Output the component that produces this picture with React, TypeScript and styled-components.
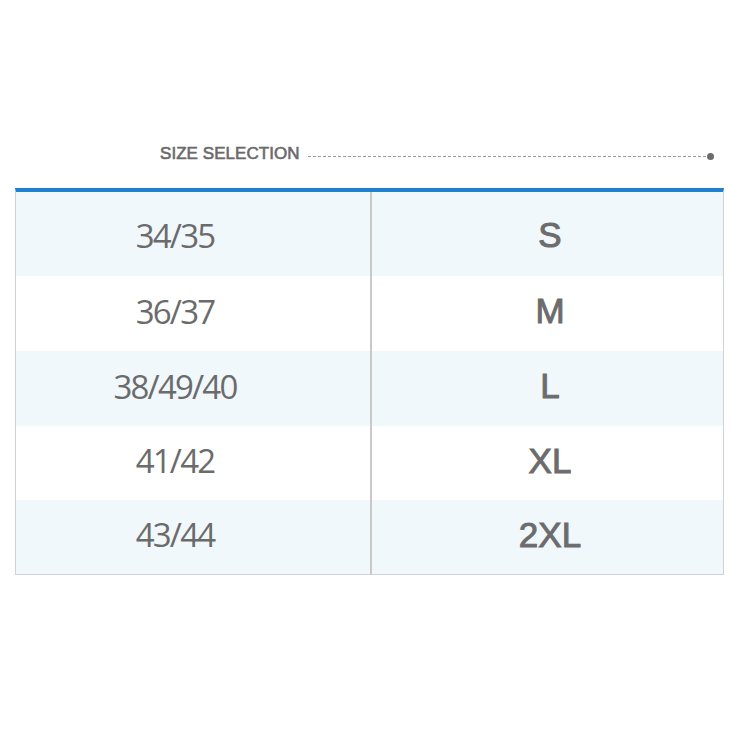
import React from "react";
import styled, { createGlobalStyle } from "styled-components";

const Global = createGlobalStyle`
  html, body { margin: 0; padding: 0; background: #ffffff; }
  body { font-family: "Liberation Sans", Arial, sans-serif; }
`;

const Page = styled.div`
  width: 746px;
  height: 746px;
  padding: 144px 22px 0 15px;
  box-sizing: border-box;
`;

const Header = styled.div`
  display: flex;
  align-items: center;
  height: 20px;
  padding: 0 10px 0 145px;
  margin-bottom: 24px;
`;

const Title = styled.div`
  font-family: "Liberation Sans", Arial, sans-serif;
  font-weight: 400;
  font-size: 17px;
  line-height: 20px;
  letter-spacing: 0.05px;
  color: #6a6a6a;
  -webkit-text-stroke: 0.6px #6a6a6a;
  white-space: nowrap;
`;

const Leader = styled.div`
  flex: 1;
  display: flex;
  align-items: center;
  margin: 4px 0 0 8px;
`;

const Dashes = styled.div`
  flex: 1;
  height: 1px;
  background-image: repeating-linear-gradient(
    to right,
    #9a9a9a 0 3px,
    transparent 3px 5px
  );
`;

const Dot = styled.div`
  width: 7px;
  height: 7px;
  border-radius: 50%;
  background: #6c6c6c;
  margin-left: -1px;
`;

const Table = styled.div`
  display: grid;
  grid-template-columns: 356px 1fr;
  border-top: 4px solid #1f80d0;
  border-left: 1px solid #cfd3d6;
  border-right: 1px solid #cfd3d6;
  border-bottom: 1px solid #cfd3d6;
`;

const Cell = styled.div<{ $shade: boolean; $first: boolean; $left?: boolean }>`
  height: ${(p) => (p.$first ? 84 : 75)}px;
  box-sizing: border-box;
  background: ${(p) => (p.$shade ? "#f1f8fc" : "#ffffff")};
  display: flex;
  align-items: center;
  justify-content: center;
  padding: ${(p) => (p.$first ? "2px 0 0" : "0 0 5px")};
  ${(p) =>
    p.$left
      ? `border-right: 2px solid #c9c9c9; padding-right: 36px;`
      : `padding-left: 5px;`}
  &:nth-last-child(-n + 4) {
    height: 74px;
  }
`;

const Range = styled.span`
  font-family: "Open Sans", "Noto Sans", sans-serif;
  font-weight: 400;
  font-size: 33px;
  letter-spacing: -1.8px;
  color: #6b6b6b;
  white-space: nowrap;
`;

const Size = styled.span`
  font-family: "Liberation Sans", Arial, sans-serif;
  font-weight: 400;
  font-size: 35px;
  color: #6c6c6c;
  -webkit-text-stroke: 1px #6c6c6c;
  white-space: nowrap;
`;

const rows = [
  { range: "34/35", size: "S" },
  { range: "36/37", size: "M" },
  { range: "38/49/40", size: "L" },
  { range: "41/42", size: "XL" },
  { range: "43/44", size: "2XL" },
];

export default function App() {
  return (
    <>
      <Global />
      <Page>
        <Header>
          <Title>SIZE SELECTION</Title>
          <Leader>
            <Dashes />
            <Dot />
          </Leader>
        </Header>
        <Table>
          {rows.map((r, i) => (
            <React.Fragment key={r.size}>
              <Cell $shade={i % 2 === 0} $first={i === 0} $left>
                <Range>{r.range}</Range>
              </Cell>
              <Cell $shade={i % 2 === 0} $first={i === 0}>
                <Size>{r.size}</Size>
              </Cell>
            </React.Fragment>
          ))}
        </Table>
      </Page>
    </>
  );
}
